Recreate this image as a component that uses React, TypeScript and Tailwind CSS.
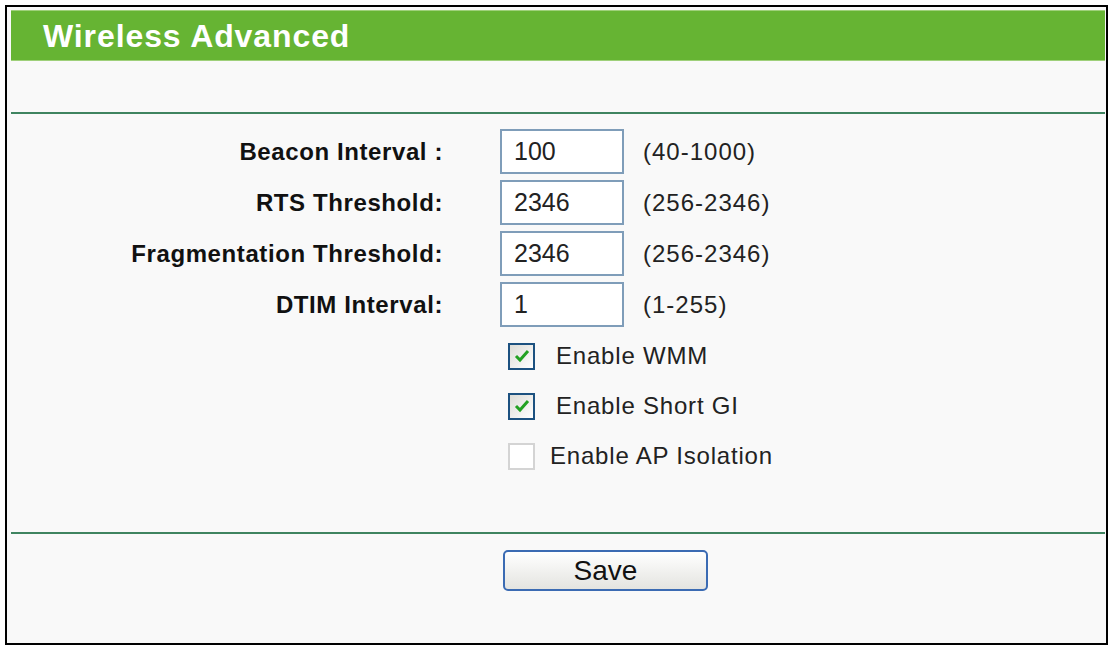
const rows = [
  { label: 'Beacon Interval :', value: '100', range: '(40-1000)' },
  { label: 'RTS Threshold:', value: '2346', range: '(256-2346)' },
  { label: 'Fragmentation Threshold:', value: '2346', range: '(256-2346)' },
  { label: 'DTIM Interval:', value: '1', range: '(1-255)' },
];

const options = [
  { label: 'Enable WMM', checked: true },
  { label: 'Enable Short GI', checked: true },
  { label: 'Enable AP Isolation', checked: false },
];

function Check({ checked }: { checked: boolean }) {
  if (!checked) {
    return <div className="w-[27px] h-[27px] border-2 border-[#d4d4d4] bg-white" />;
  }
  return (
    <div className="w-[27px] h-[27px] border-2 border-[#1c5180] bg-gradient-to-br from-[#dcdcd7] to-white flex items-center justify-center">
      <svg width="16" height="14" viewBox="0 0 16 14">
        <path d="M2 7 L6 11 L14 2" fill="none" stroke="#21a121" strokeWidth="3" />
      </svg>
    </div>
  );
}

export default function App() {
  return (
    <div className="w-[1112px] h-[650px] bg-white pt-[5px] pl-[5px] font-['Liberation_Sans',Arial,sans-serif]">
      <div className="w-[1103px] h-[640px] border-2 border-black bg-[#f9f9f9] pt-[3px] pl-[4px] pr-[1px] flex flex-col">
        <div className="h-[51px] bg-[#66b433] border-y border-[#9fd07a] flex items-center pl-[32px]">
          <span className="text-white font-bold text-[32px] leading-none tracking-[0.9px]">Wireless Advanced</span>
        </div>

        <div className="h-[51px]" />
        <div className="h-[2px] bg-[#3f8460]" />

        <div className="mt-[15px] flex flex-col gap-[6px]">
          {rows.map((r) => (
            <div key={r.label} className="flex items-center h-[45px]">
              <div className="w-[432px] text-right font-bold text-[24px] tracking-[0.6px] text-[#111]">{r.label}</div>
              <div className="ml-[57px] w-[124px] h-[45px] border-2 border-[#7f9db9] bg-white flex items-center pl-[12px] text-[25px] text-[#222]">
                {r.value}
              </div>
              <div className="ml-[19px] text-[24px] tracking-[1px] text-[#222]">{r.range}</div>
            </div>
          ))}
        </div>

        <div className="mt-[4px] flex flex-col">
          {options.map((o) => (
            <div key={o.label} className="h-[50px] flex items-center pl-[497px]">
              <Check checked={o.checked} />
              <span className={`text-[24px] tracking-[0.8px] text-[#222] ${o.checked ? 'ml-[21px]' : 'ml-[15px]'}`}>{o.label}</span>
            </div>
          ))}
        </div>

        <div className="h-[51px]" />
        <div className="h-[2px] bg-[#3f8460]" />

        <div className="mt-[16px] pl-[492px]">
          <button className="w-[205px] h-[41px] border-2 border-[#3b6bb3] rounded-[5px] bg-gradient-to-b from-white to-[#e4e4e0] text-[28px] text-[#111] leading-none">
            Save
          </button>
        </div>
      </div>
    </div>
  );
}
